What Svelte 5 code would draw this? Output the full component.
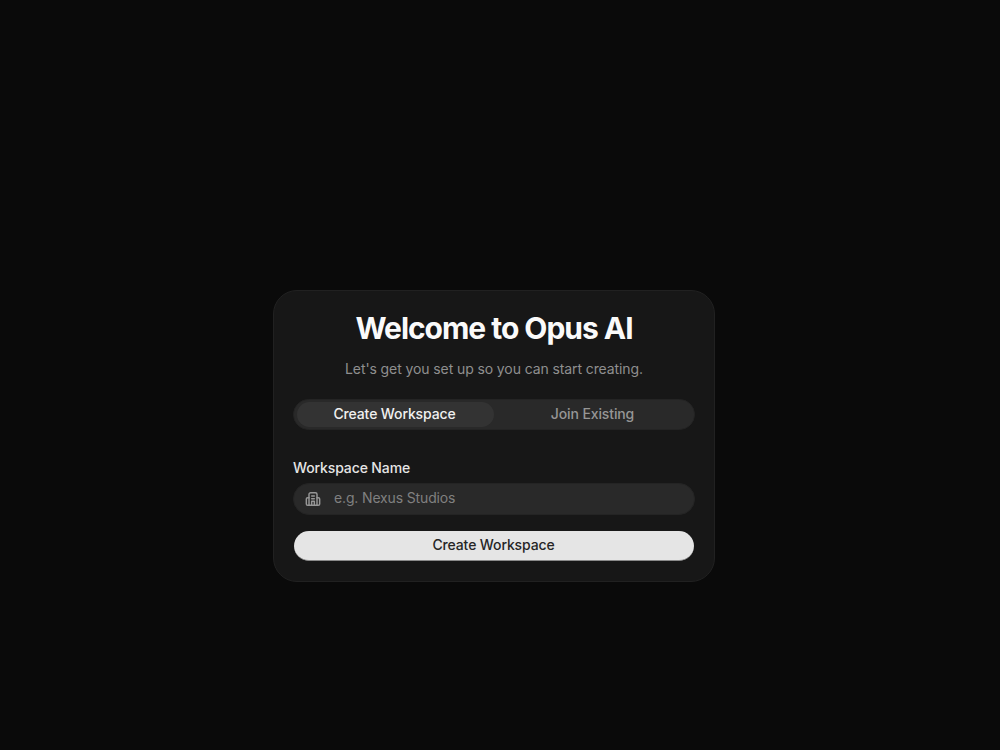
<script>
  let mode = $state("create");
  let name = $state("");
</script>

<main class="page">
  <section class="card">
    <h1>Welcome to Opus AI</h1>
    <p class="sub">Let's get you set up so you can start creating.</p>

    <div class="tabs">
      <button class="tab" class:active={mode === "create"} onclick={() => (mode = "create")}>Create Workspace</button>
      <button class="tab" class:active={mode === "join"} onclick={() => (mode = "join")}>Join Existing</button>
    </div>

    <label class="label" for="workspace">Workspace Name</label>
    <div class="field">
      <svg class="icon" viewBox="0 0 24 24" fill="none" stroke="currentColor" stroke-width="2.2" stroke-linecap="round" stroke-linejoin="round">
        <path d="M6 21.5V5a2.5 2.5 0 0 1 2.5-2.5h7A2.5 2.5 0 0 1 18 5v16.5Z" />
        <path d="M6 10H4a2 2 0 0 0-2 2v7.500a2 2 0 0 0 2 2h2" />
        <path d="M18 10h2a2 2 0 0 1 2 2v7.500a2 2 0 0 1-2 2h-2" />
        <path d="M10 7.500h4" />
        <path d="M10 11.500h4" />
        <path d="M10 21v-5.500h4V21" />
      </svg>
      <input id="workspace" placeholder="e.g. Nexus Studios" bind:value={name} />
    </div>

    <button class="submit">Create Workspace</button>
  </section>
</main>

<style>
  :global(body) {
    background: #0a0a0a;
    font-family: Inter, "Liberation Sans", sans-serif;
  }

  .page {
    box-sizing: border-box;
    min-height: 100vh;
    display: grid;
    place-items: center;
    padding: 122px 12px 0 0;
  }

  .card {
    box-sizing: border-box;
    width: 442px;
    height: 292px;
    padding: 19px 19px 0;
    background: #171717;
    border: 1px solid #212121;
    border-radius: 24px;
    box-shadow: 0 10px 25px rgba(255, 255, 255, 0.006);
    display: flex;
    flex-direction: column;
  }

  h1 {
    margin: 0;
    font-size: 30px;
    line-height: 36px;
    font-weight: 700;
    letter-spacing: -1.03px;
    color: #fafafa;
    text-align: center;
  }

  .sub {
    margin: 13px 0 0;
    font-size: 14px;
    line-height: 20px;
    letter-spacing: -0.1px;
    color: #8f8f8f;
    text-align: center;
  }

  .tabs {
    margin-top: 20px;
    height: 31px;
    box-sizing: border-box;
    padding: 2px 3px;
    display: grid;
    grid-template-columns: 1fr 1fr;
    background: #292929;
    border: 1px solid #242424;
    border-radius: 16px;
  }

  .tab {
    border: none;
    background: none;
    border-radius: 13px;
    padding: 0 0 2px;
    font: 500 14px/20px Inter, "Liberation Sans", sans-serif;
    letter-spacing: -0.12px;
    color: #969696;
    cursor: pointer;
  }

  .tab.active {
    background: #333333;
    color: #f0f0f0;
    padding-right: 2px;
  }

  .label {
    margin-top: 28px;
    font-size: 14px;
    line-height: 20px;
    font-weight: 500;
    letter-spacing: -0.12px;
    color: #e5e5e5;
  }

  .field {
    margin-top: 5px;
    height: 32px;
    box-sizing: border-box;
    padding: 0 11px;
    display: flex;
    align-items: center;
    gap: 13px;
    background: #292929;
    border: 1px solid #242424;
    border-radius: 16px;
    color: #969696;
  }

  .icon {
    width: 16px;
    height: 16px;
    flex: none;
  }

  input {
    flex: 1;
    min-width: 0;
    border: none;
    outline: none;
    background: none;
    padding: 0 0 2px;
    font: 400 14px/20px Inter, "Liberation Sans", sans-serif;
    letter-spacing: -0.15px;
    color: #e5e5e5;
  }

  input::placeholder {
    color: #808080;
  }

  .submit {
    margin: 16px 1px 0;
    height: 30px;
    border: none;
    border-bottom: 1px solid #8a8a8a;
    border-radius: 15px;
    background: #e5e5e5;
    padding: 0 1px 2px 0;
    font: 500 14px/20px Inter, "Liberation Sans", sans-serif;
    letter-spacing: -0.12px;
    color: #262626;
    cursor: pointer;
  }
</style>
